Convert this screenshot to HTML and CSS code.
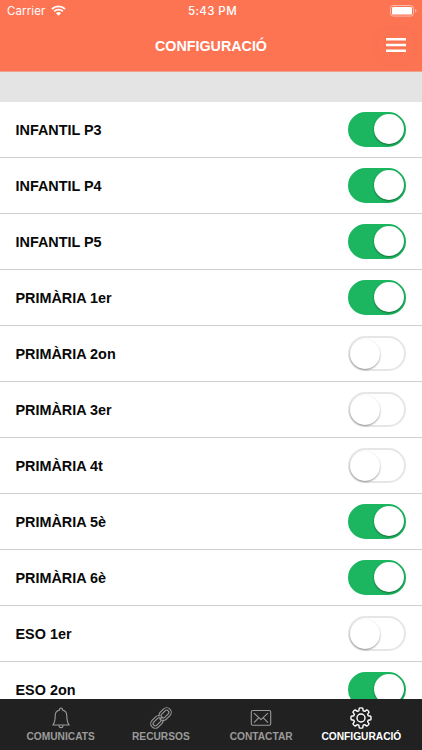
FILE: index.html
```html
<!DOCTYPE html>
<html lang="ca">
<head>
    <meta charset="UTF-8">
    <meta name="viewport" content="width=device-width, initial-scale=1.0">
    <title>Configuració</title>
    <link rel="stylesheet" href="styles.css">
</head>
<body>

    <header class="header">
        <div class="status-bar">
            <div class="carrier">
                <span>Carrier</span>
                <svg class="wifi" width="15" height="11" viewBox="0 0 15 11">
                    <path d="M1 4 A9.3 9.3 0 0 1 14 4" fill="none" stroke="#fff" stroke-width="1.9"/>
                    <path d="M3.2 6.4 A6.2 6.2 0 0 1 11.8 6.4" fill="none" stroke="#fff" stroke-width="1.8"/>
                    <path d="M5 8.2 A3.6 3.6 0 0 1 10 8.2 L7.5 10.7 Z" fill="#fff"/>
                </svg>
            </div>
            <div class="time">5:43 PM</div>
            <svg class="battery" width="27" height="12" viewBox="0 0 27 12">
                <rect x="0.5" y="0.5" width="23" height="10.6" rx="2.8" fill="none" stroke="#fff" stroke-opacity=".5"/>
                <rect x="2" y="2" width="20" height="7.6" rx="1.2" fill="#fff"/>
                <path d="M25 4 Q26.5 4.6 26.5 5.8 Q26.5 7 25 7.6 Z" fill="#fff" fill-opacity=".5"/>
            </svg>
        </div>
        <div class="title-bar">
            <h1>CONFIGURACIÓ</h1>
            <svg class="menu-button" width="36" height="30" viewBox="0 0 36 30">
                <path d="M8 9.3 H28 M8 15 H28 M8 20.7 H28" stroke="#fff" stroke-width="2.5"/>
            </svg>
        </div>
    </header>

    <main class="list">
        <div class="row"><span>INFANTIL P3</span><div class="toggle on"></div></div>
        <div class="row"><span>INFANTIL P4</span><div class="toggle on"></div></div>
        <div class="row"><span>INFANTIL P5</span><div class="toggle on"></div></div>
        <div class="row"><span>PRIMÀRIA 1er</span><div class="toggle on"></div></div>
        <div class="row"><span>PRIMÀRIA 2on</span><div class="toggle"></div></div>
        <div class="row"><span>PRIMÀRIA 3er</span><div class="toggle"></div></div>
        <div class="row"><span>PRIMÀRIA 4t</span><div class="toggle"></div></div>
        <div class="row"><span>PRIMÀRIA 5è</span><div class="toggle on"></div></div>
        <div class="row"><span>PRIMÀRIA 6è</span><div class="toggle on"></div></div>
        <div class="row"><span>ESO 1er</span><div class="toggle"></div></div>
        <div class="row"><span>ESO 2on</span><div class="toggle on"></div></div>
    </main>

    <nav class="tabs">
        <div class="tab">
            <svg width="22" height="22" viewBox="0 0 22 22">
                <path d="M9.6 3 A1.5 1.5 0 1 1 12.4 3 C15.4 3.7 16.8 5.8 16.8 8.7 C16.8 13.5 17.2 15.6 19.2 18 H2.8 C4.8 15.6 5.2 13.5 5.2 8.7 C5.2 5.8 6.6 3.7 9.6 3 Z"/>
                <path d="M9 18.2 A2 2.4 0 0 0 13 18.2"/>
            </svg>
            <span>COMUNICATS</span>
        </div>
        <div class="tab">
            <svg width="22" height="22" viewBox="0 0 22 22">
                <g transform="rotate(-45 11 11)">
                    <path d="M11.4 13.4 A4.7 4.7 0 0 1 8 15.6 H3 A4.6 4.6 0 0 1 3 6.4 H8 A4.6 4.6 0 0 1 12.6 11 H10.2 A2.2 2.2 0 0 0 8 8.8 H3 A2.2 2.2 0 0 0 3 13.2 H8 A2.2 2.2 0 0 0 9.4 12.6"/>
                    <path d="M10.6 8.6 A4.7 4.7 0 0 1 14 6.4 H19 A4.6 4.6 0 0 1 19 15.6 H14 A4.6 4.6 0 0 1 9.4 11 H11.8 A2.2 2.2 0 0 0 14 13.2 H19 A2.2 2.2 0 0 0 19 8.8 H14 A2.2 2.2 0 0 0 12.6 9.4"/>
                </g>
            </svg>
            <span>RECURSOS</span>
        </div>
        <div class="tab">
            <svg width="22" height="22" viewBox="0 0 22 22">
                <rect x="1.3" y="3.5" width="19.4" height="14.8" rx="1.6"/>
                <path d="M4 6.2 L11 12.6 L18 6.2 M4 15.6 L8.7 10.8 M18 15.6 L13.3 10.8"/>
            </svg>
            <span>CONTACTAR</span>
        </div>
        <div class="tab active">
            <svg width="22" height="22" viewBox="0 0 22 22">
                <path d="M9.3 1.2 Q11 0.6 12.7 1.2 L13.2 3.8 L14.7 4.4 L16.8 2.9 Q18.4 3.6 19.1 5.2 L17.6 7.3 L18.2 8.8 L20.8 9.3 Q21.4 11 20.8 12.7 L18.2 13.2 L17.6 14.7 L19.1 16.8 Q18.4 18.4 16.8 19.1 L14.7 17.6 L13.2 18.2 L12.7 20.8 Q11 21.4 9.3 20.8 L8.8 18.2 L7.3 17.6 L5.2 19.1 Q3.6 18.4 2.9 16.8 L4.4 14.7 L3.8 13.2 L1.2 12.7 Q0.6 11 1.2 9.3 L3.8 8.8 L4.4 7.3 L2.9 5.2 Q3.6 3.6 5.2 2.9 L7.3 4.4 L8.8 3.8 Z"/>
                <circle cx="11" cy="11" r="4"/>
            </svg>
            <span>CONFIGURACIÓ</span>
        </div>
    </nav>

</body>
</html>
```
FILE: styles.css
```css
* { box-sizing: border-box; }
body { margin: 0; height: 750px; display: flex; flex-direction: column; overflow: hidden; font-family: "Liberation Sans", Arial, sans-serif; background-color: white; }

.header { flex: none; height: 72px; background-color: #fd7453; border-bottom: 1px solid #eda18e; color: white; }
.status-bar { display: grid; grid-template-columns: 1fr auto 1fr; align-items: center; height: 22px; padding: 0 5px 0 7px; font-family: Inter, sans-serif; font-size: 11.5px; }
.carrier { display: flex; align-items: center; gap: 6px; letter-spacing: 0.1px; }
.wifi { margin-top: -1px; }
.time { font-weight: 500; letter-spacing: 0.4px; padding-left: 1px; }
.battery { justify-self: end; margin-top: -1px; }
.title-bar { display: grid; grid-template-columns: 1fr auto 1fr; align-items: center; height: 49px; padding-bottom: 2px; }
h1 { grid-column: 2; margin: 0; font-size: 14.3px; line-height: 20px; }
.menu-button { justify-self: end; margin: 0 8px 1px 0; border-radius: 12px; box-shadow: 0 0 10px rgba(120, 60, 40, 0.06); }

.list { flex: 1; min-height: 0; overflow: hidden; border-top: 30px solid #e4e4e4; }
.row { display: flex; justify-content: space-between; align-items: center; height: 56px; padding: 0 16px 0 15.5px; border-bottom: 1px solid #cfcfcf; font-size: 14.4px; font-weight: bold; color: #080808; }
.toggle { width: 58px; height: 35px; padding: 1px; border: 2px solid #e6e6e6; border-radius: 18px; background-color: white; }
.toggle::before { content: ""; display: block; width: 30px; height: 30px; margin-left: -1px; border-radius: 50%; background-color: white; box-shadow: 0 1px 2px rgba(0, 0, 0, 0.4); }
.toggle.on { border-color: #1bb65f; background-color: #1bb65f; }
.toggle.on::before { margin-left: 23px; margin-top: -1px; }

.tabs { flex: none; display: grid; grid-template-columns: repeat(4, 1fr); height: 51px; padding: 0 10.5px; background-color: #212121; }
.tab { display: flex; flex-direction: column; align-items: center; padding-top: 8px; color: #9b9b9b; font-size: 10.2px; font-weight: bold; line-height: 14px; }
.tab svg { margin-bottom: 1px; overflow: visible; fill: none; stroke: currentColor; stroke-width: 1.1; stroke-linejoin: round; }
.tab.active { color: white; }
.tab.active svg { stroke-width: 1.4; }
```
